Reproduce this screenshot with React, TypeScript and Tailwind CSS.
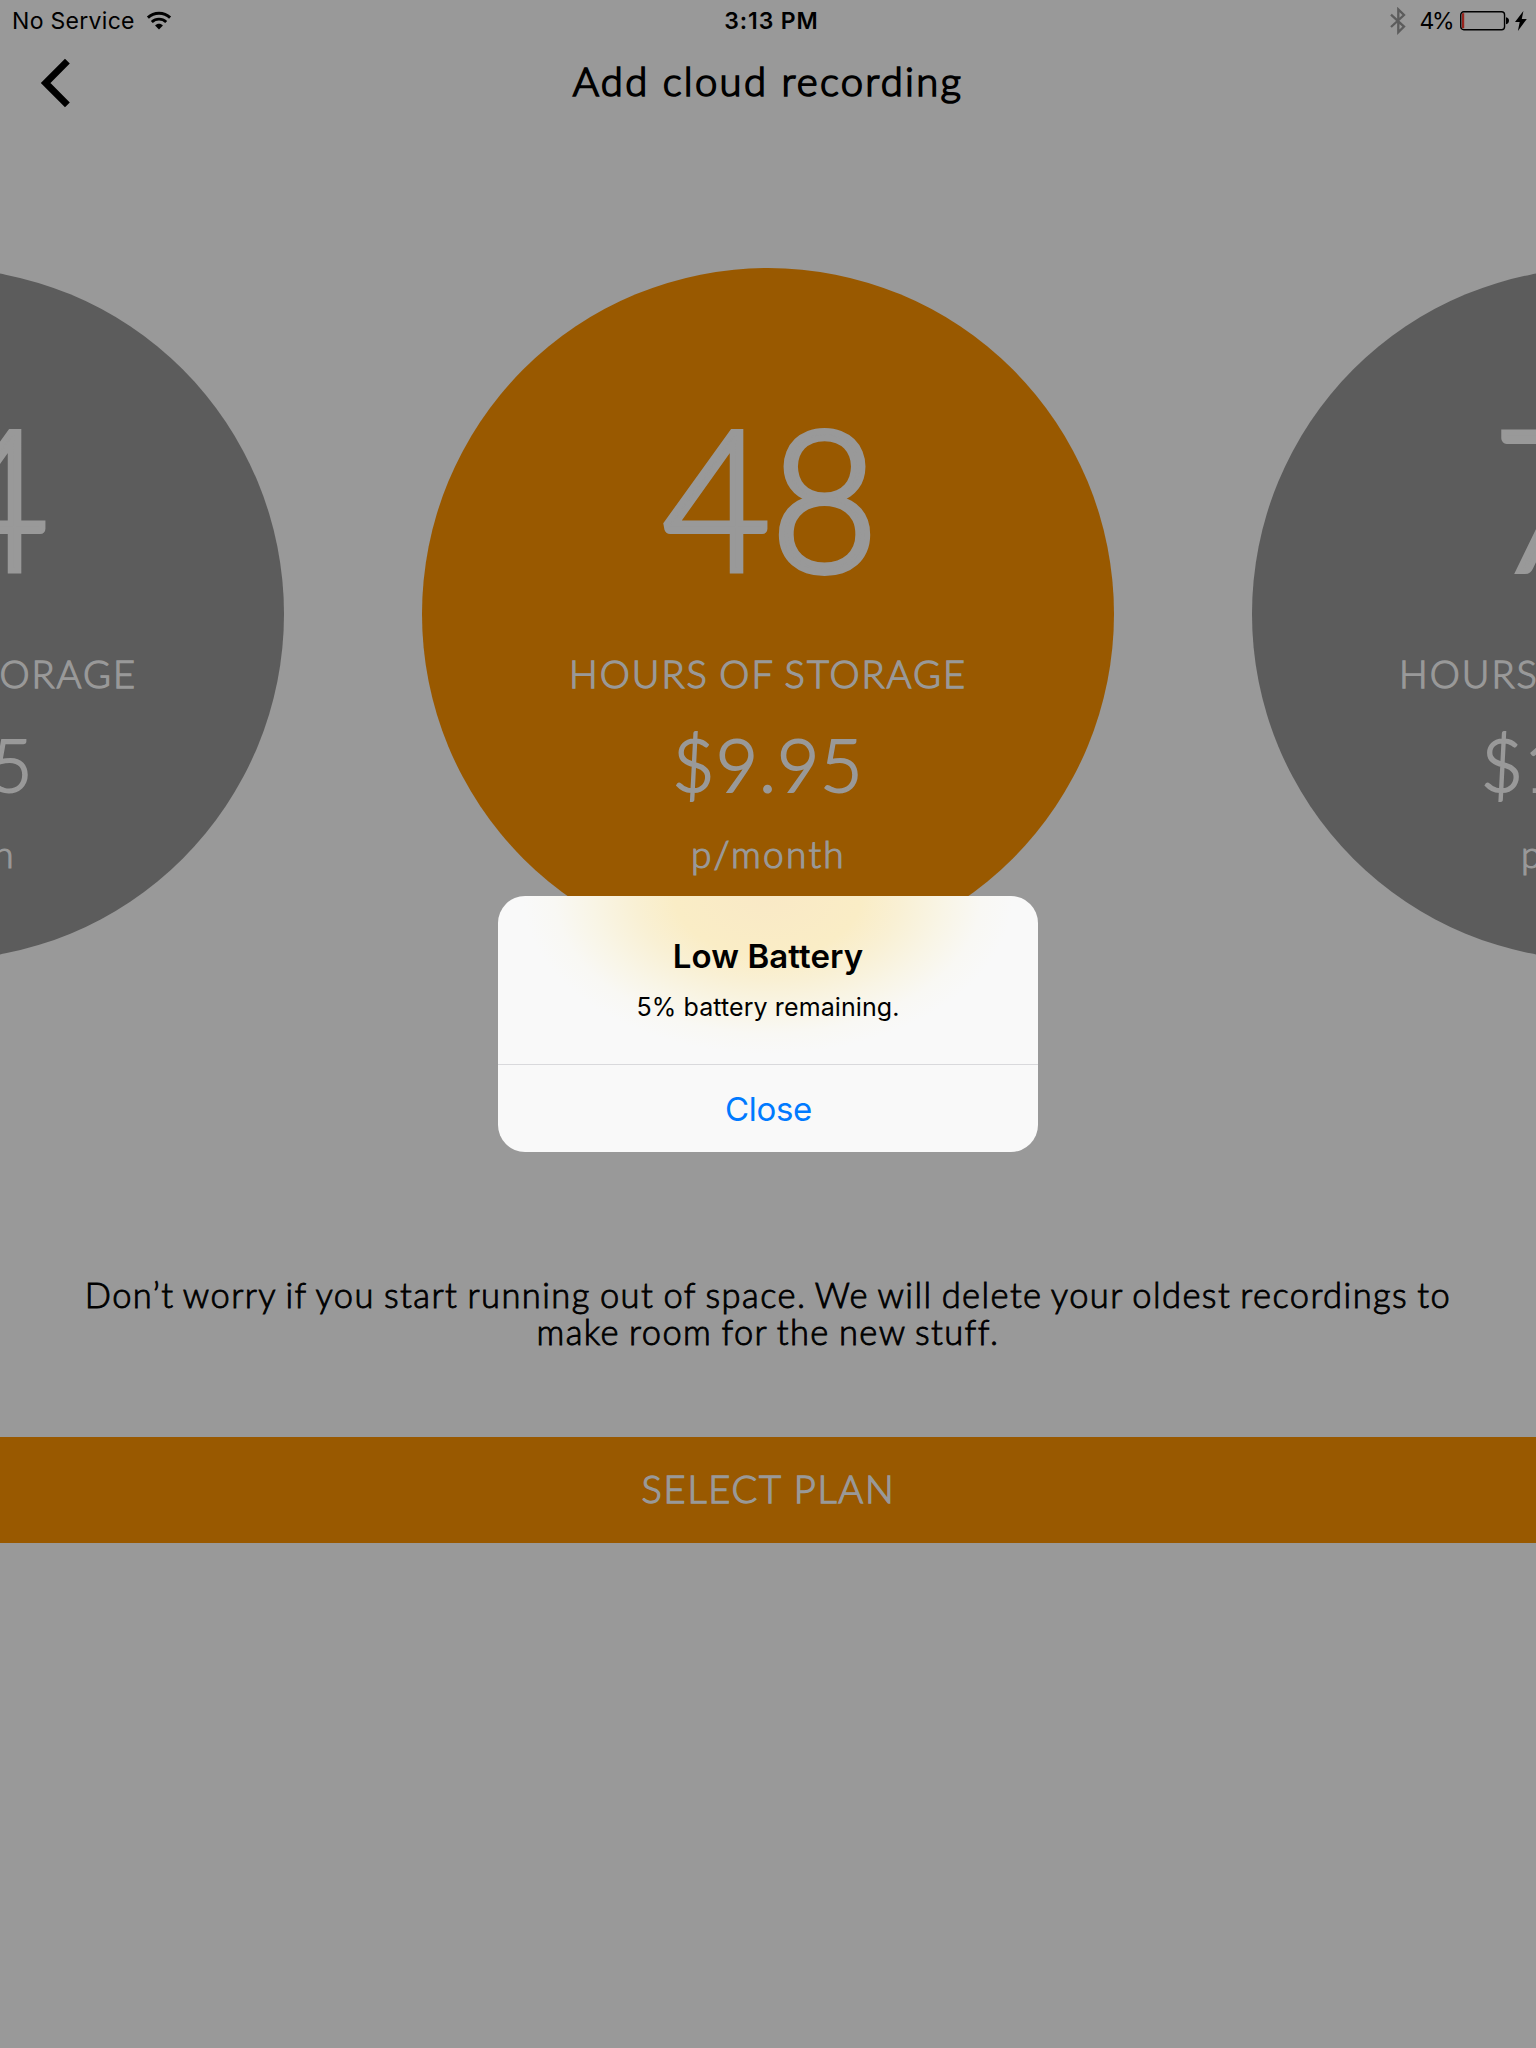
type Plan = { hours: string; price: string; active?: boolean };

const plans: Plan[] = [
  { hours: "24", price: "$4.95" },
  { hours: "48", price: "$9.95", active: true },
  { hours: "72", price: "$14.95" },
];

function WifiIcon() {
  return (
    <svg width="26" height="20" viewBox="0 0 26 20" className="ml-[11px] shrink-0" fill="none" stroke="#000" strokeWidth="2.9">
      <path d="M1.9 6.6C8 .8 18 .8 24.1 6.6" />
      <path d="M5.8 11C10 7.2 16 7.2 20.2 11" />
      <path d="M9.1 14.4C11.2 12.2 14.8 12.2 16.9 14.4L13 18.6Z" fill="#000" stroke="none" />
    </svg>
  );
}

function BluetoothIcon() {
  return (
    <svg width="16" height="28" viewBox="0 0 16 28" className="shrink-0" fill="none" stroke="#5c5c5c" strokeWidth="2.3">
      <path d="M1 7.6L14 19.6L8.3 25.2V2.4L14 8L1 20" />
    </svg>
  );
}

function BatteryIcon() {
  return (
    <svg width="50" height="20" viewBox="0 0 50 20" className="shrink-0">
      <rect x="0.75" y="0.75" width="43.8" height="18" rx="3" fill="none" stroke="#000" strokeWidth="1.4" />
      <rect x="2" y="2.2" width="2.2" height="15" fill="#98231c" />
      <path d="M46 6.3C50 7 50 12.5 46 13.2Z" fill="#000" />
    </svg>
  );
}

function BoltIcon() {
  return (
    <svg width="12" height="20" viewBox="0 0 12 20" className="shrink-0">
      <path d="M8.4 0L0 11H4.7L2.9 20L11.8 8H6.8Z" fill="#000" />
    </svg>
  );
}

function StatusBar() {
  return (
    <div className="grid h-[42px] grid-cols-3 items-center font-['Inter',sans-serif] text-[23px] leading-[42px]">
      <div className="flex items-center pl-[12px]">
        <span className="tracking-[0.3px]">No Service</span>
        <WifiIcon />
      </div>
      <div className="pl-[7px] text-center font-semibold tracking-[0.9px]">3:13 PM</div>
      <div className="flex items-center justify-end pr-[9px]">
        <BluetoothIcon />
        <span className="mr-[8px] ml-[14px] tracking-[-2.5px]">4%</span>
        <BatteryIcon />
        <span className="ml-[5px] flex">
          <BoltIcon />
        </span>
      </div>
    </div>
  );
}

function Header() {
  return (
    <header className="grid h-[76px] grid-cols-[120px_1fr_120px] items-center">
      <button className="flex pt-[6px] pl-[40px]" aria-label="Back">
        <svg width="30" height="50" viewBox="0 0 30 50" fill="none" stroke="#000" strokeWidth="6.8">
          <path d="M27.4 3.2L5.6 25L27.4 46.8" />
        </svg>
      </button>
      <h1 className="pt-[2px] text-center text-[40px] leading-[60px] font-light tracking-[2.3px] [-webkit-text-stroke:1.7px_#000]">
        Add cloud recording
      </h1>
    </header>
  );
}

function PlanCircle({ plan }: { plan: Plan }) {
  return (
    <section
      className={`flex size-[692px] shrink-0 flex-col items-center rounded-full pt-[128px] font-light text-[#999] ${
        plan.active ? "bg-[#995900]" : "bg-[#5c5c5c]"
      }`}
    >
      <p className="scale-x-95 pl-[5px] text-[196px] leading-[200px] [-webkit-text-stroke:6px_#999]">{plan.hours}</p>
      <p className="mt-[52px] text-[38px] leading-[50px] tracking-[2.05px] [word-spacing:-2px] [-webkit-text-stroke:1.3px_#999]">
        HOURS OF STORAGE
      </p>
      <p className="mt-[21px] text-[73px] leading-[90px] tracking-[1px] [-webkit-text-stroke:2px_#999]">{plan.price}</p>
      <p className="mt-[20px] pl-px text-[37px] leading-[50px] tracking-[2.3px] [-webkit-text-stroke:1.2px_#999]">
        p/month
      </p>
    </section>
  );
}

function BatteryAlert() {
  return (
    <div className="absolute inset-0 flex items-center justify-center">
      <div
        role="alertdialog"
        className="flex h-[256px] w-[540px] flex-col overflow-hidden rounded-[27px] bg-[#f9f9f9] bg-[radial-gradient(ellipse_245px_158px_at_50%_0%,#f9e9c6_0%,#faedc6_38%,#f9f0d4_54%,#f9f5e6_72%,#f9f8f4_87%,#f9f9f9_100%)] text-center font-['Inter',sans-serif]"
      >
        <div className="h-[168px] pt-[40px]">
          <h2 className="text-[33px] leading-[40px] font-semibold tracking-[0.1px]">Low Battery</h2>
          <p className="mt-[15px] text-[25px] leading-[32px] tracking-[0.1px]">5% battery remaining.</p>
        </div>
        <button className="flex-1 border-t border-[#d9d9dc] pl-px text-[33px] leading-[40px] tracking-[-0.3px] text-[#007aff]">
          Close
        </button>
      </div>
    </div>
  );
}

export default function App() {
  return (
    <div className="relative h-[2048px] w-[1536px] overflow-hidden bg-[#999] font-['Lato',sans-serif] text-black">
      <StatusBar />
      <Header />
      <main>
        <div className="mt-[150px] flex justify-center gap-[138px] overflow-hidden whitespace-nowrap">
          {plans.map((plan) => (
            <PlanCircle key={plan.hours} plan={plan} />
          ))}
        </div>
        <p className="mt-[316px] text-center text-[34.5px] leading-[37px] font-light tracking-[1.42px] [word-spacing:-1.6px] whitespace-nowrap [-webkit-text-stroke:0.9px_#000]">
          Don’t worry if you start running out of space. We will delete your oldest recordings to
          <br />
          make room for the new stuff.
        </p>
        <button className="mt-[87px] flex h-[106px] w-full items-center justify-center bg-[#995900] pb-[4px] pl-px text-[38px] font-light tracking-[1.75px] text-[#999] [-webkit-text-stroke:1.3px_#999]">
          SELECT PLAN
        </button>
      </main>
      <BatteryAlert />
    </div>
  );
}
